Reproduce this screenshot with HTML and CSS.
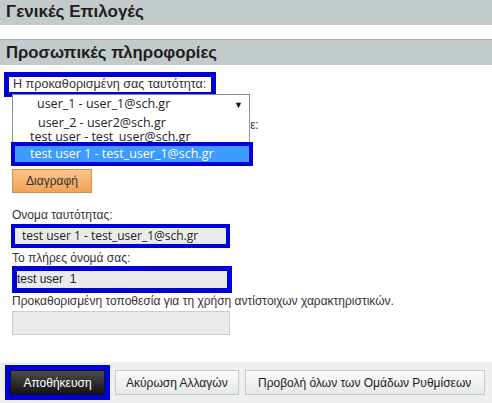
FILE: index.html
```html
<!DOCTYPE html>
<html lang="el">
<head>
<meta charset="utf-8">
<title>Γενικές Επιλογές</title>
<link rel="stylesheet" href="styles.css">
</head>
<body>
<div class="page">
  <div class="head head-main">Γενικές Επιλογές</div>
  <div class="head head-sub">Προσωπικές πληροφορίες</div>
  <div class="form">
    <div class="field-first">
      <span class="label mark">Η προκαθορισμένη σας ταυτότητα:</span>
    </div>
    <div class="select-wrap">
      <div class="select"><span class="select-text">user_1 - user_1@sch.gr</span><span class="arrow">▼</span></div>
      <div class="dropdown">
        <div class="opt opt-a">user_2 - user2@sch.gr</div>
        <div class="opt opt-b">test user - test_user@sch.gr</div>
        <div class="opt opt-sel mark-thin">test user 1 - test_user_1@sch.gr</div>
      </div>
    </div>
    <div class="label under">Επιλέξτε την ταυτότητα που θέλετε να αλλάξετε:</div>
    <div class="select under-select"></div>
    <button class="btn-orange" type="button">Διαγραφή</button>
    <div class="label l-name">Ονομα ταυτότητας:</div>
    <div class="input input-a mark-thin">test user 1 - test_user_1@sch.gr</div>
    <div class="label l-full">Το πλήρες όνομά σας:</div>
    <div class="input input-b mark">test user&nbsp; 1</div>
    <div class="label l-loc">Προκαθορισμένη τοποθεσία για τη χρήση αντίστοιχων χαρακτηριστικών.</div>
    <div class="input input-c"></div>
  </div>
  <div class="footer">
    <button class="btn btn-dark mark" type="button">Αποθήκευση</button>
    <button class="btn" type="button">Ακύρωση Αλλαγών</button>
    <button class="btn btn-wide" type="button">Προβολή όλων των Ομάδων Ρυθμίσεων</button>
  </div>
</div>
</body>
</html>
```

FILE: styles.css
```css
* { box-sizing: border-box; }
html, body { margin: 0; padding: 0; background: #ffffff; }
body {
  font-family: "Liberation Sans", Arial, sans-serif;
  font-size: 12px;
  color: #333;
  width: 492px;
  height: 403px;
  overflow: hidden;
}
.page { display: flex; flex-direction: column; height: 403px; }

.head {
  background: #c2cacb;
  color: #1e1e1e;
  font-weight: bold;
  padding-left: 6px;
}
.head-main { height: 25px; line-height: 24px; font-size: 17px; }
.head-sub {
  margin-top: 14px;
  height: 26px;
  line-height: 25px;
  font-size: 16.7px;
  border-top: 1px solid #a9b1b1;
}

.mark { outline: 5px solid #0000dd; }
.mark-thin { outline: 4px solid #0000dd; }

.form { padding-left: 12px; flex: 1; display: flex; flex-direction: column; align-items: flex-start; }

.field-first { margin-top: 12px; margin-left: -3px; }
.label { font-size: 12px; color: #333; line-height: 15px; white-space: nowrap; }
.field-first .label { display: inline-block; padding: 0 4px; font-size: 12.6px; background: #fff; width: 202px; }

.select-wrap { position: relative; margin-top: 2px; width: 238px; height: 20px; }
.select {
  width: 238px;
  height: 20px;
  border: 1px solid #7d8c9e;
  background: #fff;
  font-family: "Open Sans", "Noto Sans", sans-serif;
  font-size: 12.5px;
  color: #222;
  display: flex;
  align-items: center;
  padding-left: 24px;
  position: relative;
}
.select-text { flex: 1; line-height: 18px; }
.arrow { font-size: 9px; color: #111; margin-right: 6px; }

.dropdown {
  position: absolute;
  top: 19px;
  left: 0;
  width: 238px;
  height: 30px;
  border-left: 1px solid #8e9bb0;
  border-right: 1px solid #8e9bb0;
  background: #fff;
  z-index: 2;
  font-family: "Open Sans", "Noto Sans", sans-serif;
  font-size: 12.5px;
  color: #222;
}
.opt { line-height: 14px; white-space: nowrap; }
.opt-a { padding-left: 25px; padding-top: 3px; }
.opt-b { padding-left: 17px; }
.opt-sel {
  position: absolute;
  left: 2px;
  top: 33px;
  width: 234px;
  height: 16px;
  line-height: 16px;
  background: #3b9bff;
  color: #fff;
  padding-left: 15px;
}

.under { margin-top: 4px; letter-spacing: -0.14px; }
.under-select { margin-top: 8px; padding: 0; }

.btn-orange {
  margin-top: 8px;
  width: 80px;
  height: 24px;
  border: 1px solid #d98a3c;
  background: linear-gradient(#fbc48c, #f2a255);
  font-family: "Liberation Sans", Arial, sans-serif;
  font-size: 12px;
  color: #333;
  padding: 0;
}

.l-name { margin-top: 15px; }
.input {
  background: #e9ebeb;
  font-family: "Open Sans", "Noto Sans", sans-serif;
  font-size: 12px;
  color: #222;
  white-space: nowrap;
}
.input-a {
  margin-top: 5px;
  margin-left: 3px;
  width: 211px;
  height: 16px;
  line-height: 16px;
  padding-left: 7px;
}
.l-full { margin-top: 7px; }
.input-b {
  margin-top: 5px;
  margin-left: 5px;
  width: 210px;
  height: 17px;
  line-height: 17px;
  font-family: "Liberation Sans", Arial, sans-serif;
  font-size: 12px;
}
.l-loc { margin-top: 6px; }
.input-c {
  margin-top: 2px;
  width: 218px;
  height: 24px;
  border: 1px solid #c9cdcd;
  background: #e9ebeb;
}

.footer {
  height: 41px;
  background: #eef0f0;
  display: flex;
  align-items: center;
  gap: 6px;
  padding-left: 10px;
}
.btn {
  height: 25px;
  border: 1px solid #c6c9c9;
  background: linear-gradient(#fbfbfb, #e6e8e8);
  font-family: "Liberation Sans", Arial, sans-serif;
  font-size: 12px;
  color: #222;
  padding: 0 10px;
}
.btn-dark {
  width: 95px;
  background: linear-gradient(#4a4a4a, #141414);
  color: #fff;
  border-color: #111;
  margin-right: 4px;
}
.btn-wide { width: 240px; }
```
